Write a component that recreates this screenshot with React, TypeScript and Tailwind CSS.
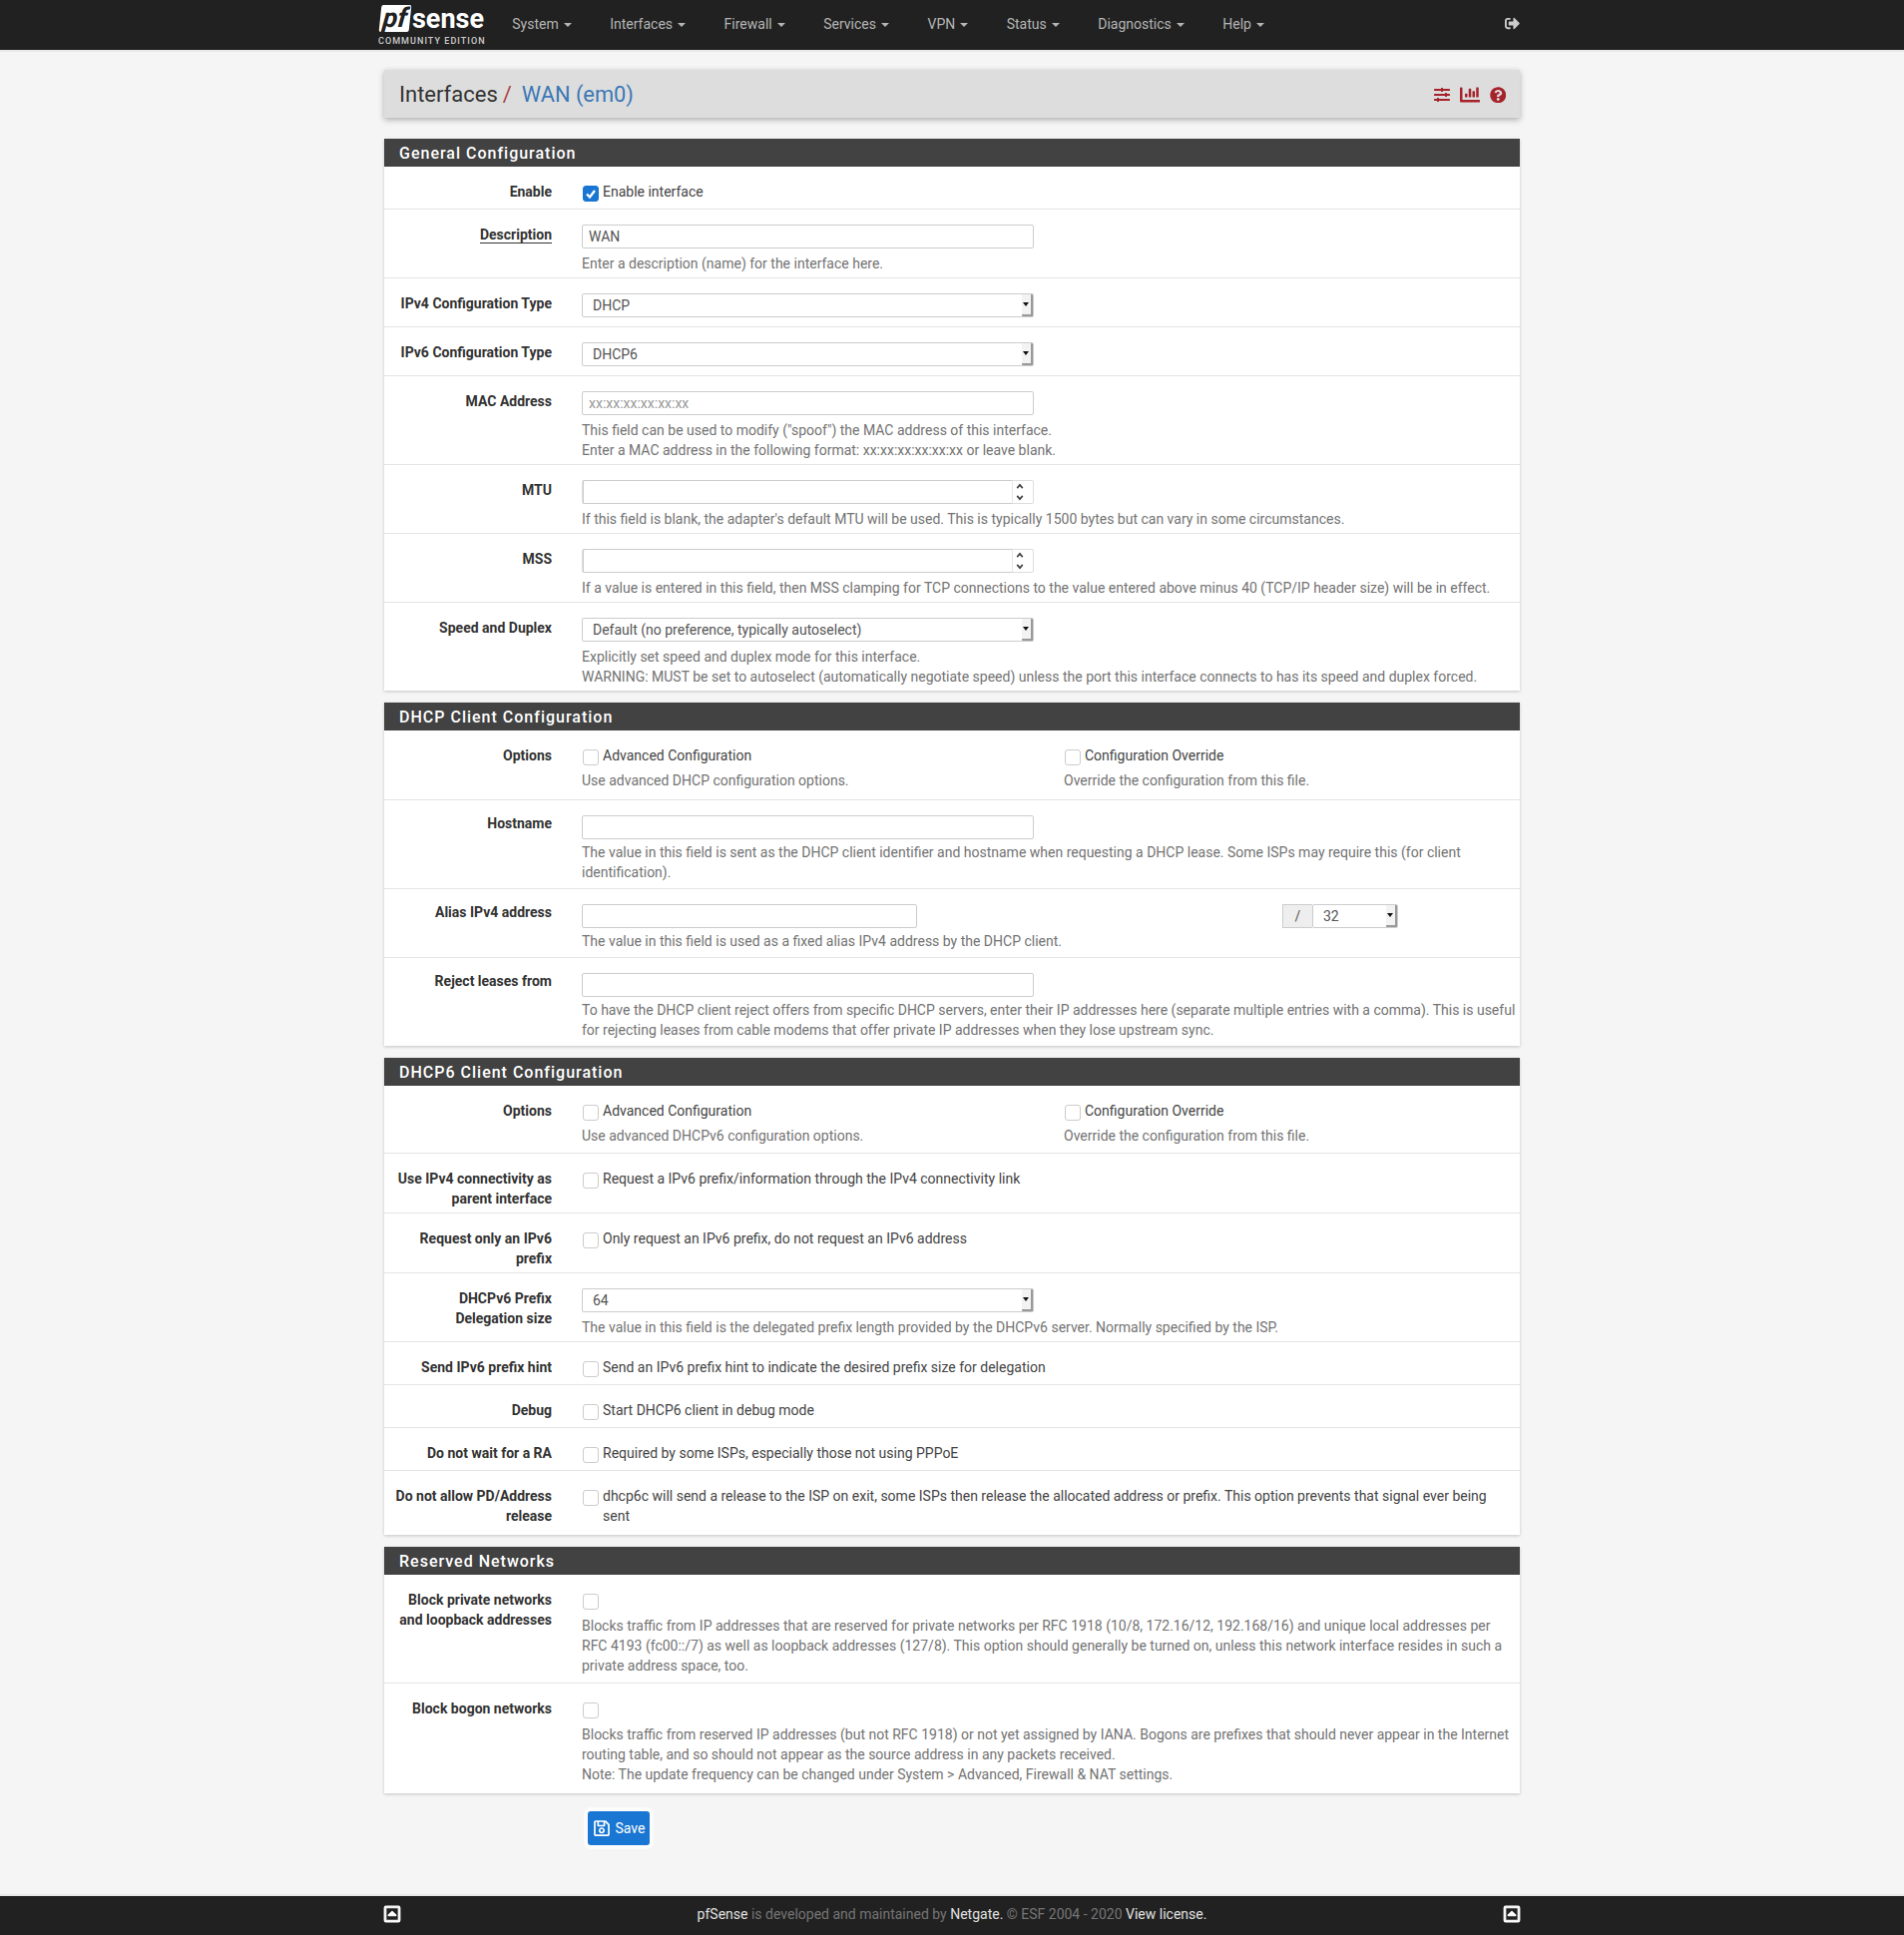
import React from 'react';
import {
  FaChartBar,
  FaQuestionCircle,
  FaRegCaretSquareUp,
  FaRegSave,
  FaSignOutAlt,
  FaSlidersH,
} from 'react-icons/fa';

const navItems = ['System', 'Interfaces', 'Firewall', 'Services', 'VPN', 'Status', 'Diagnostics', 'Help'];

const Section = ({ title, children }: { title: string; children: React.ReactNode }) => (
  <section className="mb-[12px] bg-white shadow-[0_1px_3px_rgba(0,0,0,0.2)]">
    <h2 className="h-[28px] bg-[#424242] pl-[15px] text-[16px] leading-[29px] font-medium tracking-[1px] text-white">{title}</h2>
    {children}
  </section>
);

const Row = ({
  label,
  underline,
  raised,
  pb = 'pb-[4px]',
  children,
}: {
  label: string;
  underline?: boolean;
  raised?: boolean;
  pb?: string;
  children: React.ReactNode;
}) => (
  <div className={`flex border-b border-[#e4e4e4] pt-[15px] last:border-b-transparent ${pb}`}>
    <div className={`w-[198px] shrink-0 pr-[30px] pl-[8px] text-right font-bold text-[#333] ${raised ? '-mt-[2px]' : ''}`}>
      {underline ? <span className="border-b border-[#333]">{label}</span> : label}
    </div>
    <div className="min-w-0 flex-1 pr-[3px]">{children}</div>
  </div>
);

const Help = ({ mt = 'mt-[5px]', children }: { mt?: string; children: React.ReactNode }) => (
  <div className={`${mt} text-[#737373]`}>{children}</div>
);

const TextInput = ({ value, placeholder, width = 'w-[453px]' }: { value?: string; placeholder?: string; width?: string }) => (
  <input
    readOnly
    value={value ?? ''}
    placeholder={placeholder}
    className={`block h-[24px] rounded-[2px] border border-[#ccc] bg-white px-[6px] text-[#555] placeholder:text-[#999] ${width}`}
  />
);

const NumberInput = () => (
  <div className="flex h-[24px] w-[453px] rounded-[2px] border border-[#ddd] bg-white">
    <input readOnly className="-my-px min-w-0 flex-1 rounded-l-[2px] border-y border-l border-[#ccc]" />
    <div className="flex w-[21px] flex-col border-l border-[#e6e6e6] pl-px text-[#444]">
      <svg viewBox="0 0 10 10" className="h-[11px] w-[12px]" fill="none" stroke="currentColor" strokeWidth="1.5"><path d="M2.5 6.5 5 3.5 7.5 6.5" /></svg>
      <svg viewBox="0 0 10 10" className="h-[11px] w-[12px]" fill="none" stroke="currentColor" strokeWidth="1.5"><path d="M2.5 3.5 5 6.5 7.5 3.5" /></svg>
    </div>
  </div>
);

const SelectBox = ({ value, width = 'w-[453px]' }: { value: string; width?: string }) => (
  <div className={`flex h-[24px] items-center rounded-[2px] border border-[#ccc] bg-white pl-[10px] text-[#555] ${width}`}>
    <span className="flex-1">{value}</span>
    <span className="flex h-[22px] w-[11px] items-center justify-center rounded-[1px] border-r-2 border-b-2 border-[#999] bg-[#f3f3f3] pr-[2px]">
      <svg viewBox="0 0 6 4" className="h-[4px] w-[6px]"><path d="M0 0h6L3 4z" fill="#111" /></svg>
    </span>
  </div>
);

const Check = ({ label, checked }: { label?: string; checked?: boolean }) => (
  <label className="flex text-[#444]">
    <span
      className={`mt-[4px] mr-[4px] ml-px flex h-[16px] w-[16px] shrink-0 items-center justify-center rounded-[3px] border ${
        checked ? 'border-[#1976d2] bg-[#1976d2]' : 'border-[#ccc] bg-white'
      }`}
    >
      {checked && (
        <svg viewBox="0 0 12 12" className="h-[12px] w-[12px]" fill="none" stroke="#fff" strokeWidth="2.4"><path d="M2 6.5 5 9.5 10 3" /></svg>
      )}
    </span>
    {label && <span className="pr-[6px]">{label}</span>}
  </label>
);

const TwoOptions = ({ help }: { help: string }) => (
  <div className="flex">
    <div className="w-[483px]">
      <Check label="Advanced Configuration" />
      <Help>{help}</Help>
    </div>
    <div>
      <Check label="Configuration Override" />
      <Help>Override the configuration from this file.</Help>
    </div>
  </div>
);

const FooterIcon = () => (
  <FaRegCaretSquareUp className="-mx-px text-[18px] text-white" stroke="currentColor" strokeWidth={30} />
);

export default function App() {
  return (
    <div className="flex min-h-[1939px] flex-col bg-[#f5f5f5] font-['Roboto',sans-serif] text-[14px] leading-[20px]">
      <nav className="h-[52px] border-b-2 border-[#e8e8e8] bg-[#212121]">
        <div className="mx-auto flex h-[50px] w-[1140px] items-center">
          <div className="ml-[-6px] w-[110px] shrink-0 text-white">
            <div className="flex h-[29px] items-center pl-[3px]">
              <span className="flex h-[27px] w-[30px] -skew-x-6 items-center justify-center rounded-[2px] bg-white text-[27px] leading-[27px] font-bold text-[#212121] italic">pf</span>
              <span className="ml-[2px] text-[27px] leading-[30px] font-bold">sense</span>
            </div>
            <div className="mt-[3px] pl-px text-[9px] leading-[10px] font-medium tracking-[1.05px] whitespace-nowrap text-[#ccc]">COMMUNITY EDITION</div>
          </div>
          <ul className="ml-[6px] flex flex-1 pb-[2px] text-[#b5b5b5]">
            {navItems.map((item) => (
              <li key={item} className="flex items-center px-[19.25px]">
                {item}
                <span className="mt-[2px] ml-[5px] border-x-[4px] border-t-[4px] border-x-transparent border-t-[#b5b5b5]" />
              </li>
            ))}
          </ul>
          <FaSignOutAlt className="mt-[-3px] mr-[1px] text-[15px] text-[#ccc]" />
        </div>
      </nav>

      <main className="mx-auto w-[1138px] pt-[18px]">
        <div className="mb-[21px] flex h-[48px] items-center justify-between bg-[#ddd] pt-[2px] pr-[14px] pl-[15px] shadow-[0_2px_6px_rgba(0,0,0,0.3)]">
          <div className="text-[22px] text-[#333]">
            Interfaces<span className="ml-[5px] text-[#a94442]">/</span>
            <span className="ml-[10px] text-[21.8px] text-[#3b78b5]">WAN (em0)</span>
          </div>
          <div className="flex items-center gap-[10px] text-[16px] text-[#a5232a]">
            <FaSlidersH />
            <FaChartBar className="text-[20px]" />
            <FaQuestionCircle className="text-[16.5px]" />
          </div>
        </div>

        <Section title="General Configuration">
          <Row label="Enable" pb="pb-[7px]"><Check label="Enable interface" checked /></Row>
          <Row label="Description" underline>
            <TextInput value="WAN" />
            <Help>Enter a description (name) for the interface here.</Help>
          </Row>
          <Row label="IPv4 Configuration Type" pb="pb-[9px]"><SelectBox value="DHCP" /></Row>
          <Row label="IPv6 Configuration Type" pb="pb-[9px]"><SelectBox value="DHCP6" /></Row>
          <Row label="MAC Address">
            <TextInput placeholder="xx:xx:xx:xx:xx:xx" />
            <Help>
              This field can be used to modify ("spoof") the MAC address of this interface.<br />
              Enter a MAC address in the following format: xx:xx:xx:xx:xx:xx or leave blank.
            </Help>
          </Row>
          <Row label="MTU">
            <NumberInput />
            <Help>If this field is blank, the adapter's default MTU will be used. This is typically 1500 bytes but can vary in some circumstances.</Help>
          </Row>
          <Row label="MSS">
            <NumberInput />
            <Help>If a value is entered in this field, then MSS clamping for TCP connections to the value entered above minus 40 (TCP/IP header size) will be in effect.</Help>
          </Row>
          <Row label="Speed and Duplex" pb="pb-[3px]">
            <SelectBox value="Default (no preference, typically autoselect)" />
            <Help>
              Explicitly set speed and duplex mode for this interface.<br />
              WARNING: MUST be set to autoselect (automatically negotiate speed) unless the port this interface connects to has its speed and duplex forced.
            </Help>
          </Row>
        </Section>

        <Section title="DHCP Client Configuration">
          <Row label="Options" pb="pb-[9px]"><TwoOptions help="Use advanced DHCP configuration options." /></Row>
          <Row label="Hostname" raised pb="pb-[6px]">
            <TextInput />
            <Help mt="mt-[3px]">The value in this field is sent as the DHCP client identifier and hostname when requesting a DHCP lease. Some ISPs may require this (for client identification).</Help>
          </Row>
          <Row label="Alias IPv4 address" raised pb="pb-[6px]">
            <div className="flex">
              <TextInput width="w-[336px]" />
              <div className="ml-[366px] flex">
                <span className="flex h-[24px] w-[30px] items-center justify-center border-y border-l border-[#ccc] bg-[#eee] text-[#555]">/</span>
                <SelectBox value="32" width="w-[86px]" />
              </div>
            </div>
            <Help mt="mt-[3px]">The value in this field is used as a fixed alias IPv4 address by the DHCP client.</Help>
          </Row>
          <Row label="Reject leases from" raised pb="pb-[5px]">
            <TextInput />
            <Help mt="mt-[3px]">To have the DHCP client reject offers from specific DHCP servers, enter their IP addresses here (separate multiple entries with a comma). This is useful for rejecting leases from cable modems that offer private IP addresses when they lose upstream sync.</Help>
          </Row>
        </Section>

        <Section title="DHCP6 Client Configuration">
          <Row label="Options" pb="pb-[7px]"><TwoOptions help="Use advanced DHCPv6 configuration options." /></Row>
          <Row label="Use IPv4 connectivity as parent interface"><Check label="Request a IPv6 prefix/information through the IPv4 connectivity link" /></Row>
          <Row label="Request only an IPv6 prefix"><Check label="Only request an IPv6 prefix, do not request an IPv6 address" /></Row>
          <Row label="DHCPv6 Prefix Delegation size">
            <SelectBox value="64" />
            <Help>The value in this field is the delegated prefix length provided by the DHCPv6 server. Normally specified by the ISP.</Help>
          </Row>
          <Row label="Send IPv6 prefix hint" pb="pb-[7px]"><Check label="Send an IPv6 prefix hint to indicate the desired prefix size for delegation" /></Row>
          <Row label="Debug" pb="pb-[7px]"><Check label="Start DHCP6 client in debug mode" /></Row>
          <Row label="Do not wait for a RA" pb="pb-[7px]"><Check label="Required by some ISPs, especially those not using PPPoE" /></Row>
          <Row label="Do not allow PD/Address release" pb="pb-[8px]"><Check label="dhcp6c will send a release to the ISP on exit, some ISPs then release the allocated address or prefix. This option prevents that signal ever being sent" /></Row>
        </Section>

        <Section title="Reserved Networks">
          <Row label="Block private networks and loopback addresses" pb="pb-[7px]">
            <Check />
            <Help mt="mt-[6px]">Blocks traffic from IP addresses that are reserved for private networks per RFC 1918 (10/8, 172.16/12, 192.168/16) and unique local addresses per RFC 4193 (fc00::/7) as well as loopback addresses (127/8). This option should generally be turned on, unless this network interface resides in such a private address space, too.</Help>
          </Row>
          <Row label="Block bogon networks" pb="pb-[8px]">
            <Check />
            <Help mt="mt-[6px]">
              Blocks traffic from reserved IP addresses (but not RFC 1918) or not yet assigned by IANA. Bogons are prefixes that should never appear in the Internet routing table, and so should not appear as the source address in any packets received.<br />
              Note: The update frequency can be changed under System &gt; Advanced, Firewall &amp; NAT settings.
            </Help>
          </Row>
        </Section>

        <button className="mt-[18px] ml-[204px] flex h-[34px] w-[62px] items-center justify-center gap-[5px] rounded-[3px] bg-[#1976d2] text-white shadow-[0_0_0_4px_rgba(255,255,255,0.7)]">
          <FaRegSave className="text-[18px]" />
          Save
        </button>
      </main>

      <footer className="mt-auto flex h-[41px] items-center border-t-2 border-[#e8e8e8] bg-[#212121] pb-[4px]">
        <div className="mx-auto flex w-[1138px] items-center justify-between">
          <FooterIcon />
          <p className="text-[#757575]">
            <span className="text-[#e0e0e0]">pfSense</span> is developed and maintained by <span className="text-[#e0e0e0]">Netgate.</span> © ESF 2004 - 2020 <span className="text-[#e0e0e0]">View license.</span>
          </p>
          <FooterIcon />
        </div>
      </footer>
    </div>
  );
}
